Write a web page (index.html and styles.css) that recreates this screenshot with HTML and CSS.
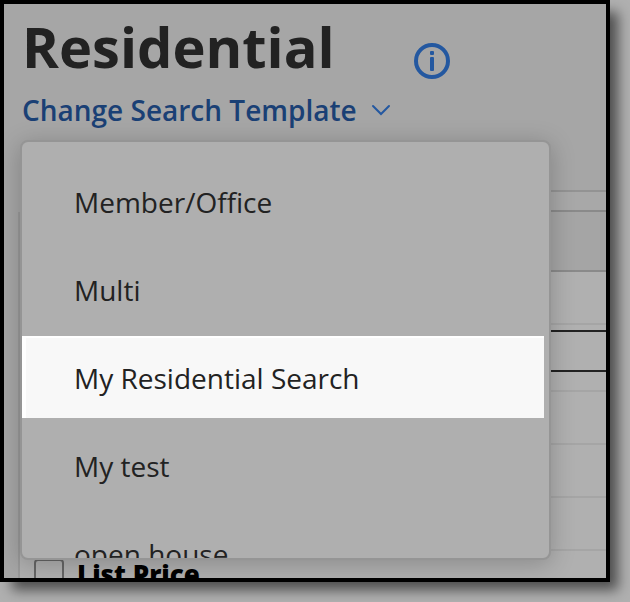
FILE: index.html
```html
<!DOCTYPE html>
<html lang="en">
<head>
    <meta charset="UTF-8">
    <meta name="viewport" content="width=device-width, initial-scale=1.0">
    <title>Residential</title>
    <link rel="stylesheet" href="styles.css">
</head>
<body>
    <div class="frame">
        <header class="header">
            <div class="title-row">
                <h1>Residential</h1>
                <button type="button" class="info-btn" aria-label="Information">
                    <svg width="36" height="36" viewBox="0 0 36 36">
                        <circle cx="18" cy="18" r="16" fill="none" stroke="#2458a0" stroke-width="4"/>
                        <rect x="16" y="8" width="4" height="4" rx="1" fill="#2458a0"/>
                        <rect x="16" y="14" width="4" height="14" rx="1" fill="#2458a0"/>
                    </svg>
                </button>
            </div>

            <div class="template">
                <button type="button" class="template-btn" aria-expanded="true" aria-controls="templateMenu">
                    Change Search Template
                    <svg width="20" height="12" viewBox="0 0 20 12">
                        <path d="M2 2l8 8 8-8" fill="none" stroke="#2458a0" stroke-width="2" stroke-linecap="round"/>
                    </svg>
                </button>

                <ul class="menu" id="templateMenu">
                    <li><button type="button" class="menu-item">Member/Office</button></li>
                    <li><button type="button" class="menu-item">Multi</button></li>
                    <li><button type="button" class="menu-item active">My Residential Search</button></li>
                    <li><button type="button" class="menu-item">My test</button></li>
                    <li><button type="button" class="menu-item">open house</button></li>
                </ul>
            </div>
        </header>

        <div class="strip"></div>

        <main class="panel">
            <div class="panel-head"></div>
            <div class="row"></div>
            <div class="row row-field">
                <input type="text" class="field" aria-label="Search value">
            </div>
            <div class="row"></div>
            <div class="row"></div>
            <div class="row"></div>
            <div class="row row-check">
                <input type="checkbox" id="listPrice">
                <label for="listPrice">List Price</label>
            </div>
        </main>
    </div>
</body>
</html>
```
FILE: styles.css
```css
* {
    box-sizing: border-box;
    margin: 0;
    padding: 0;
    font-family: 'Open Sans', 'Noto Sans', sans-serif;
}

body {
    background-color: #b0b0b0;
    padding: 0 20px 20px 0;
    height: 100vh;
}

.frame {
    height: 100%;
    overflow: hidden;
    background-color: #a6a6a6;
    border: 4px solid #000;
    box-shadow: 10px 10px 12px -2px rgba(0, 0, 0, 0.56);
}

button {
    background: none;
    border: none;
    cursor: pointer;
}

svg {
    display: block;
}

/* Header */
.header {
    padding: 4px 18px 56px;
}

.title-row {
    display: flex;
    align-items: center;
    gap: 79px;
    margin-bottom: 2px;
}

h1 {
    font-size: 56px;
    line-height: 76px;
    font-weight: 700;
    color: #222;
}

.info-btn {
    padding-top: 30px;
}

.template {
    position: relative;
}

.template-btn {
    display: flex;
    align-items: center;
    gap: 14px;
    height: 48px;
    font-size: 28px;
    line-height: 48px;
    font-weight: 600;
    color: #1a4075;
}

/* Template menu */
.menu {
    position: absolute;
    top: 54px;
    left: -2px;
    z-index: 1;
    width: 531px;
    height: 420px;
    padding: 18px 5px 0 0;
    overflow: hidden;
    list-style: none;
    background-color: #afafaf;
    border: 2px solid #959595;
    border-radius: 8px;
    box-shadow: 0 4px 24px rgba(0, 0, 0, 0.22);
}

.menu li {
    margin-bottom: 6px;
}

.menu-item {
    display: block;
    width: 100%;
    padding: 21px 48px;
    border-top: 2px solid transparent;
    border-left: 4px solid transparent;
    font-size: 28px;
    line-height: 38px;
    color: #222;
    text-align: left;
}

.menu-item.active {
    background-color: #f8f8f8;
    border-color: #fff;
}

/* Search criteria */
.strip {
    height: 22px;
    margin-left: 16px;
    background-color: #a8a8a8;
    border-top: 2px solid #939393;
    border-bottom: 2px solid #8a8a8a;
}

.panel {
    margin-left: 14px;
    background-color: #b0b0b0;
    border-left: 2px solid #999;
}

.panel-head {
    height: 60px;
    background-color: #a5a5a5;
    border-bottom: 2px solid #8a8a8a;
}

.row {
    height: 53px;
    border-bottom: 2px solid #a5a5a5;
}

.row-field {
    height: 67px;
    padding-top: 5px;
}

.field {
    display: block;
    width: 100%;
    height: 42px;
    padding: 0 12px;
    font-size: 28px;
    background-color: #b0b0b0;
    border: 2px solid #222;
    border-right: none;
}

.row-check {
    display: flex;
    align-items: flex-start;
    gap: 13px;
    padding: 8px 14px;
}

.row-check input {
    appearance: none;
    width: 30px;
    height: 30px;
    border: 2px solid #666;
    border-radius: 4px;
}

.row-check label {
    font-size: 26px;
    line-height: 30px;
    font-weight: 800;
    color: #000;
}
```
